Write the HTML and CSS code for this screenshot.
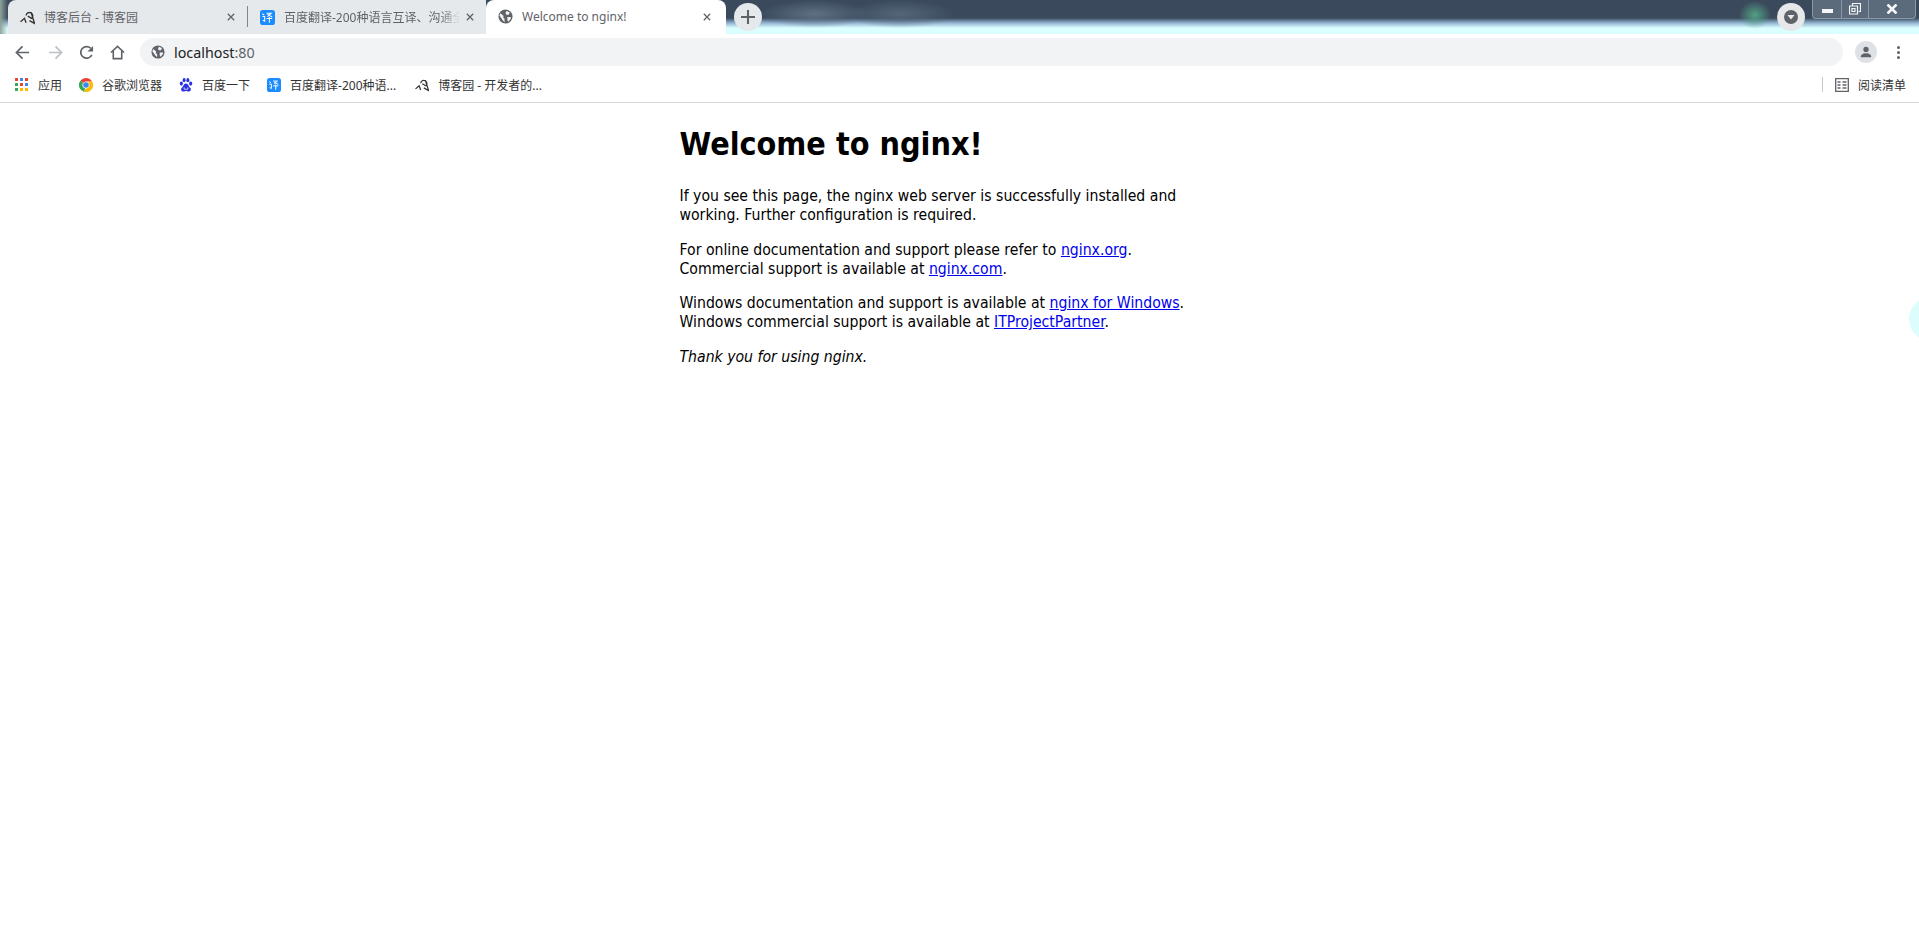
FILE: index.html
```html
<!DOCTYPE html>
<html>
<head>
    <meta charset="utf-8" />
    <title>Welcome to nginx!</title>
    <link rel="stylesheet" href="styles.css">
</head>
<body>
    <div class="tabstrip">
        <div class="tab">
            <svg class="favicon" viewBox="0.500 1.500 13.500 12.500"><path d="M1 11.500 4.500 8.500 6 12.500M6 6a3 3 0 1 1 5 2.500L7.500 6.500M10.500 3 13.500 13 9 10.500" fill="none" stroke="#333" stroke-width="1.200"/></svg>
            <span class="tabTitle">博客后台 - 博客园</span>
            <svg class="tabClose" viewBox="0 0 10 10"><path d="M1 1 9 9M9 1 1 9" stroke="#5f6368" stroke-width="1.600"/></svg>
        </div>
        <div class="tabDivider"></div>
        <div class="tab second">
            <svg class="favicon" viewBox="0 0 16 16"><rect width="16" height="16" rx="3" fill="#1a8cff"/><path d="M2.500 4 4.500 5.500M2.500 7H5V12L3 11M7 3.500H12L8 7M8 4.500 13 7.500M7 9H13M10 7.500V13.500" fill="none" stroke="#fff" stroke-width="1.100"/></svg>
            <span class="tabTitle fade">百度翻译-200种语言互译、沟通全</span>
            <svg class="tabClose" viewBox="0 0 10 10"><path d="M1 1 9 9M9 1 1 9" stroke="#5f6368" stroke-width="1.600"/></svg>
        </div>
        <div class="tab active">
            <svg class="favicon" viewBox="0 0 16 16"><use href="#globe"/></svg>
            <span class="tabTitle">Welcome to nginx!</span>
            <svg class="tabClose" viewBox="0 0 10 10"><path d="M1 1 9 9M9 1 1 9" stroke="#5f6368" stroke-width="1.600"/></svg>
        </div>
        <button class="newTab">
            <svg viewBox="0 0 12 12"><path d="M6 0V12M0 6H12" stroke="#5f6368" stroke-width="1.800"/></svg>
        </button>
        <div class="tabSearch">
            <svg viewBox="0 0 16 16"><circle cx="8" cy="8" r="7" fill="#5f6368"/><path d="M4.500 6H11.500L8 10.500Z" fill="#e8eaed"/></svg>
        </div>
        <div class="winControls">
            <div class="winBtn minBtn"><span class="minBar"></span></div>
            <div class="winBtn restoreBtn">
                <svg viewBox="0 0 12 12"><path d="M3.500 2.500V.5H11.500V8.500H9.500M.5 3H8.500V11H.5ZM3 5.500H6V8.500H3Z" fill="none" stroke="#f4f6f8" stroke-width="1.200"/></svg>
            </div>
            <div class="winBtn closeBtn">
                <svg viewBox="0 0 12 10"><path d="M1.500 .5 10.500 9.500M10.500 .5 1.500 9.500" stroke="#f4f6f8" stroke-width="2.600"/></svg>
            </div>
        </div>
    </div>

    <div class="toolbar">
        <svg class="navIcon" viewBox="0 0 16 16"><path d="M15 8H2M8 1.500 1.500 8 8 14.500" fill="none" stroke="#5f6368" stroke-width="1.800"/></svg>
        <svg class="navIcon forward" viewBox="0 0 16 16"><path d="M1 8H14M8 1.500 14.500 8 8 14.500" fill="none" stroke="#bdc1c6" stroke-width="1.800"/></svg>
        <svg class="navIcon reload" viewBox="0 0 16 16"><path d="M13.700 10.500A6.200 6.200 0 1 1 12.500 3.500" fill="none" stroke="#5f6368" stroke-width="1.800"/><path d="M15 1V7H9Z" fill="#5f6368"/></svg>
        <svg class="navIcon home" viewBox="0 0 16 16"><path d="M1 8 8 1.500 15 8M3.500 6.500V14.500H12.500V6.500" fill="none" stroke="#5f6368" stroke-width="1.700"/></svg>
        <div class="omnibox">
            <svg class="omniGlobe" viewBox="0 0 16 16">
                <symbol id="globe" viewBox="0 0 16 16">
                    <circle cx="8" cy="8" r="7.500" fill="#5f6368"/>
                    <path d="M2.500 4.500 6 7.500 5.500 9 7 10.500V14L5 12 1.500 7ZM9 2 12.500 3.500 11.500 6H9L8 4.500ZM10 8.500H13.500L13.800 10 11 13.500 10 12Z" fill="#f1f3f4"/>
                </symbol>
                <use href="#globe"/>
            </svg>
            <span class="url">localhost<span class="urlPort">:80</span></span>
        </div>
        <div class="avatar">
            <svg viewBox="0 0 16 16"><circle cx="8" cy="4.500" r="3.500" fill="#5f6368"/><path d="M1 15C1 11 4 9.500 8 9.500S15 11 15 15Z" fill="#5f6368"/></svg>
        </div>
        <div class="kebab"><i></i><i></i><i></i></div>
    </div>

    <div class="bookmarks">
        <a class="bookmark appsLink">
            <svg class="bmIcon" viewBox="0 0 13 13">
                <rect width="3" height="3" fill="#ea4335"/><rect x="5" width="3" height="3" fill="#4285f4"/><rect x="10" width="3" height="3" fill="#ea4335"/>
                <rect y="5" width="3" height="3" fill="#34a853"/><rect x="5" y="5" width="3" height="3" fill="#ea4335"/><rect x="10" y="5" width="3" height="3" fill="#4285f4"/>
                <rect y="10" width="3" height="3" fill="#34a853"/><rect x="5" y="10" width="3" height="3" fill="#fbbc05"/><rect x="10" y="10" width="3" height="3" fill="#fbbc05"/>
            </svg>
            应用
        </a>
        <a class="bookmark">
            <svg class="bmIcon" viewBox="0 0 16 16">
                <path d="M8 0A8 8 0 0 1 15 4H8A4 4 0 0 0 4.500 6L1.800 2.800A8 8 0 0 1 8 0Z" fill="#ea4335"/>
                <path d="M1.800 2.800 4.500 6 A4 4 0 0 0 7 12L5.500 15.600A8 8 0 0 1 1.800 2.800Z" fill="#34a853"/>
                <path d="M15 4A8 8 0 0 1 5.500 15.600L7.500 12A4 4 0 0 0 11 5.500L10.500 4Z" fill="#fbbc05"/>
                <circle cx="8" cy="8" r="3.200" fill="#4285f4"/>
            </svg>
            谷歌浏览器
        </a>
        <a class="bookmark">
            <svg class="bmIcon" viewBox="1 0.500 14 15">
                <ellipse cx="3" cy="6.500" rx="1.700" ry="2.300" fill="#2932e1"/><ellipse cx="6" cy="2.800" rx="1.600" ry="2.300" fill="#2932e1"/><ellipse cx="10" cy="2.800" rx="1.600" ry="2.300" fill="#2932e1"/><ellipse cx="13" cy="6.500" rx="1.700" ry="2.300" fill="#2932e1"/>
                <path d="M8 6.500C5.500 6.500 5 10 3.500 11 2 12.500 3 15 5 15 6.500 15 7 14.500 8 14.500S9.500 15 11 15C13 15 14 12.500 12.500 11 11 10 10.500 6.500 8 6.500Z" fill="#2932e1"/>
                <path d="M6 10.500V12.500H10V10.500" fill="none" stroke="#fff" stroke-width=".8"/>
            </svg>
            百度一下
        </a>
        <a class="bookmark wide">
            <svg class="bmIcon" viewBox="0 0 16 16"><rect width="16" height="16" rx="3" fill="#1a8cff"/><path d="M2.500 4 4.500 5.500M2.500 7H5V12L3 11M7 3.500H12L8 7M8 4.500 13 7.500M7 9H13M10 7.500V13.500" fill="none" stroke="#fff" stroke-width="1.100"/></svg>
            百度翻译-200种语...
        </a>
        <a class="bookmark">
            <svg class="bmIcon" viewBox="0.500 1.500 13.500 12.500"><path d="M1 11.500 4.500 8.500 6 12.500M6 6a3 3 0 1 1 5 2.500L7.500 6.500M10.500 3 13.500 13 9 10.500" fill="none" stroke="#333" stroke-width="1.200"/></svg>
            博客园 - 开发者的...
        </a>
        <div class="readingList">
            <span class="bmDivider"></span>
            <svg class="bmIcon" viewBox="0 0 14 14"><path d="M.7.7H13.300V13.300H.7ZM2.500 4H5.500M2.500 7H5.500M2.500 10H5.500M7.500 4H11.500M7.500 7H11.500M7.500 10H11.500" fill="none" stroke="#5f6368" stroke-width="1.300"/></svg>
            阅读清单
        </div>
    </div>

    <div class="page">
        <h1>Welcome to nginx!</h1>
        <p>If you see this page, the nginx web server is successfully installed and<br>
        working. Further configuration is required.</p>
        <p>For online documentation and support please refer to
        <a href="#">nginx.org</a>.<br>
        Commercial support is available at
        <a href="#">nginx.com</a>.</p>
        <p>Windows documentation and support is available at
        <a href="#">nginx for Windows</a>.<br>
        Windows commercial support is available at
        <a href="#">ITProjectPartner</a>.</p>
        <p><em>Thank you for using nginx.</em></p>
    </div>

    <div class="sideBubble"></div>
</body>
</html>
```

FILE: styles.css
```css
html, body {
    height: 100%;
}

body {
    margin: 0;
    background: white;
    overflow: hidden;
    position: relative;
    font-family: "Noto Sans", "Noto Sans CJK SC", sans-serif;
}

svg {
    display: block;
    flex: none;
}

/* tab strip */
.tabstrip {
    position: relative;
    display: flex;
    align-items: flex-end;
    height: 34px;
    padding-left: 8px;
    box-sizing: border-box;
    background-image:
        radial-gradient(ellipse 16px 14px at 1755px 15px, #52a184, transparent),
        radial-gradient(ellipse 55px 14px at 815px 14px, #5f7084, transparent),
        radial-gradient(ellipse 55px 14px at 900px 14px, #55667a, transparent),
        linear-gradient(to right, #8fa39a, transparent 8px),
        linear-gradient(to bottom, #3a4a5c 0, #3a4a5c 18px, #93b4d2 23px, #dbffff 28px, #dbffff 34px);
}

.tab {
    display: flex;
    align-items: center;
    width: 239px;
    height: 34px;
    padding: 0 12px 0 12px;
    box-sizing: border-box;
    background: #e6e9ec;
    color: #5f6368;
    font-size: 12px;
}

.tab:first-child {
    border-radius: 8px 0 0 0;
}

.tab.second {
    width: 238px;
}

.tab.active {
    width: 240px;
    background: white;
    border-radius: 8px 8px 0 0;
    padding-right: 15px;
    padding-bottom: 1px;
}

.tabDivider {
    width: 1px;
    height: 34px;
    background: linear-gradient(to bottom, #e6e9ec 6px, #80868b 6px, #80868b 27px, #e6e9ec 27px);
}

.favicon {
    width: 15px;
    height: 15px;
    margin-right: 9px;
}

.tabTitle {
    flex: 1;
    overflow: hidden;
    white-space: nowrap;
}

.fade {
    -webkit-mask-image: linear-gradient(to right, black 85%, transparent 97%);
    mask-image: linear-gradient(to right, black 85%, transparent 97%);
}

.tabClose {
    width: 8px;
    height: 8px;
}

.newTab {
    width: 28px;
    height: 28px;
    margin: 0 0 3px 8px;
    padding: 7px;
    border: none;
    border-radius: 50%;
    background: #e6e9ec;
}

.tabSearch {
    position: absolute;
    left: 1777px;
    top: 3px;
    width: 28px;
    height: 28px;
    padding: 6px;
    box-sizing: border-box;
    border-radius: 50%;
    background: #e6e8ea;
}

.winControls {
    position: absolute;
    right: 3px;
    top: 0;
    display: flex;
    height: 18px;
    border: 1px solid #8a96a3;
    border-top: none;
    border-radius: 0 0 4px 4px;
    background: #5c6b7b;
}

.winBtn {
    display: flex;
    align-items: center;
    justify-content: center;
    height: 100%;
    border-left: 1px solid #8a96a3;
}

.minBtn {
    width: 28px;
    border-left: none;
}

.minBar {
    width: 11px;
    height: 4px;
    margin-top: 4px;
    background: #f4f6f8;
}

.restoreBtn {
    width: 26px;
}

.restoreBtn svg {
    width: 12px;
    height: 12px;
}

.closeBtn {
    width: 46px;
}

.closeBtn svg {
    width: 12px;
    height: 10px;
}

/* toolbar */
.toolbar {
    display: flex;
    align-items: center;
    height: 36px;
    padding: 0 0 0 15px;
    background: white;
}

.navIcon {
    width: 15px;
    height: 15px;
}

.forward {
    margin-left: 18px;
}

.reload {
    margin-left: 16px;
}

.home {
    margin-left: 16px;
}

.omnibox {
    display: flex;
    align-items: center;
    width: 1703px;
    height: 28px;
    margin: 0 0 0 15px;
    padding-left: 11px;
    box-sizing: border-box;
    border-radius: 14px;
    background: #f1f3f4;
}

.omniGlobe {
    width: 14px;
    height: 14px;
    margin-right: 9px;
}

.url {
    color: #202124;
    font-size: 14.300px;
}

.urlPort {
    color: #5f6368;
}

.avatar {
    width: 22px;
    height: 22px;
    margin-left: 12px;
    padding: 5px;
    box-sizing: border-box;
    border-radius: 50%;
    background: #dee1e6;
}

.kebab {
    display: flex;
    flex-direction: column;
    gap: 2px;
    margin-left: 20px;
}

.kebab i {
    width: 3px;
    height: 3px;
    border-radius: 50%;
    background: #5f6368;
}

/* bookmarks */
.bookmarks {
    display: flex;
    align-items: center;
    height: 33px;
    padding-left: 15px;
    padding-bottom: 3px;
    box-sizing: border-box;
    border-bottom: 1px solid #d5d7da;
    color: #333;
    font-size: 12px;
    white-space: nowrap;
}

.bookmark {
    display: flex;
    align-items: center;
    gap: 9px;
    margin-right: 17px;
    color: #333;
}

.bookmark.wide {
    margin-right: 19px;
}

.bmIcon {
    width: 14px;
    height: 14px;
}

.appsLink .bmIcon {
    width: 13px;
    height: 13px;
    margin-right: 1px;
}

.readingList {
    display: flex;
    align-items: center;
    gap: 9px;
    margin-left: auto;
    margin-right: 13px;
}

.bmDivider {
    width: 1px;
    height: 15px;
    margin-right: 3px;
    background: #c4c7cb;
}

/* nginx page */
.page {
    width: 560px;
    margin: 0 auto;
    padding-top: 8px;
    color: black;
    font-family: "DejaVu Sans Condensed", "DejaVu Sans", sans-serif;
    font-size: 15.650px;
    line-height: 19.300px;
}

h1 {
    margin: 0 0 23px;
    padding-top: 14px;
    font-size: 32px;
    line-height: 38px;
}

p {
    margin: 15px 0;
}

a {
    color: #0000ee;
}

.sideBubble {
    position: absolute;
    left: 1909px;
    top: 297px;
    width: 44px;
    height: 44px;
    border-radius: 50%;
    background: #dcfdfb;
}
```
